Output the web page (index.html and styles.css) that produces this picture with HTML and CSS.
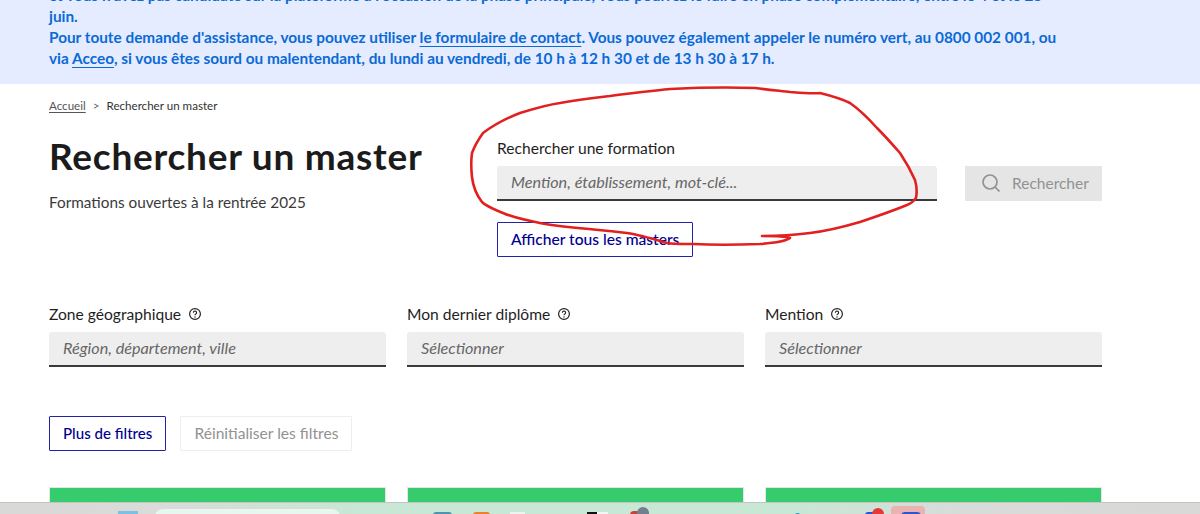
FILE: index.html
```html
<!DOCTYPE html>
<html lang="fr">
<head>
<meta charset="utf-8">
<title>Rechercher un master</title>
<link rel="stylesheet" href="styles.css">
</head>
<body>
<div class="page">
  <div class="banner">
    <p>et vous n'avez pas candidaté sur la plateforme à l'occasion de la phase principale, vous pourrez le faire en phase complémentaire, entre le 4 et le 25 juin.<br>
    Pour toute demande d'assistance, vous pouvez utiliser <a href="#">le formulaire de contact</a>. Vous pouvez également appeler le numéro vert, au 0800 002 001, ou via <a href="#">Acceo</a>, si vous êtes sourd ou malentendant, du lundi au vendredi, de 10 h à 12 h 30 et de 13 h 30 à 17 h.</p>
  </div>
  <main class="main">
    <nav class="crumbs"><a href="#">Accueil</a><span class="sep">&gt;</span><span>Rechercher un master</span></nav>
    <section class="hero">
      <div class="hero-left">
        <h1>Rechercher un master</h1>
        <p class="sub">Formations ouvertes à la rentrée 2025</p>
      </div>
      <div class="hero-right">
        <div class="search-row">
          <div class="search-field">
            <label class="label">Rechercher une formation</label>
            <div class="input">Mention, établissement, mot-clé...</div>
          </div>
          <div class="search-btn">
            <svg class="search-icon" viewBox="0 0 20 20" width="20" height="20" aria-hidden="true"><circle cx="9" cy="9" r="7" fill="none" stroke="#929292" stroke-width="1.7"/><path d="M14 14l4.5 4.5" stroke="#929292" stroke-width="1.7" fill="none"/></svg>
            <span>Rechercher</span>
          </div>
        </div>
        <a class="btn btn-all" href="#">Afficher tous les masters</a>
      </div>
    </section>
    <section class="filters">
      <div class="filter">
        <div class="label">Zone géographique <svg class="help" viewBox="0 0 14 14" width="14" height="14" aria-hidden="true"><circle cx="7" cy="7" r="5.4" fill="none" stroke="#222" stroke-width="1.2"/><path d="M5.4 5.7a1.6 1.6 0 1 1 2.4 1.4c-.5.3-.8.6-.8 1.1" fill="none" stroke="#222" stroke-width="1.1"/><circle cx="7" cy="10" r=".7" fill="#222"/></svg></div>
        <div class="input">Région, département, ville</div>
      </div>
      <div class="filter">
        <div class="label">Mon dernier diplôme <svg class="help" viewBox="0 0 14 14" width="14" height="14" aria-hidden="true"><circle cx="7" cy="7" r="5.4" fill="none" stroke="#222" stroke-width="1.2"/><path d="M5.4 5.7a1.6 1.6 0 1 1 2.4 1.4c-.5.3-.8.6-.8 1.1" fill="none" stroke="#222" stroke-width="1.1"/><circle cx="7" cy="10" r=".7" fill="#222"/></svg></div>
        <div class="input">Sélectionner</div>
      </div>
      <div class="filter">
        <div class="label">Mention <svg class="help" viewBox="0 0 14 14" width="14" height="14" aria-hidden="true"><circle cx="7" cy="7" r="5.4" fill="none" stroke="#222" stroke-width="1.2"/><path d="M5.4 5.7a1.6 1.6 0 1 1 2.4 1.4c-.5.3-.8.6-.8 1.1" fill="none" stroke="#222" stroke-width="1.1"/><circle cx="7" cy="10" r=".7" fill="#222"/></svg></div>
        <div class="input">Sélectionner</div>
      </div>
    </section>
    <div class="actions">
      <a class="btn btn-more" href="#">Plus de filtres</a>
      <span class="btn btn-off">Réinitialiser les filtres</span>
    </div>
    <section class="cards">
      <div class="card"></div>
      <div class="card"></div>
      <div class="card"></div>
    </section>
  </main>
  <footer class="taskbar">
    <span class="tb tb-win"></span>
    <span class="tb pill"></span>
    <span class="tb tb-steel"></span>
    <span class="tb tb-orange"></span>
    <span class="tb tb-white"></span>
    <span class="tb tb-black"></span>
    <span class="tb tb-white2"></span>
    <span class="tb tb-red"></span>
    <span class="tb tb-gray"></span>
    <span class="tb tb-dot"></span>
    <span class="tb tb-blue"></span>
    <span class="tb tb-badge"></span>
    <span class="tb tb-pink"><span class="tb-pink-in"></span></span>
  </footer>
  <svg class="scribble" viewBox="0 0 1200 514" width="1200" height="514" aria-hidden="true"><path d="M762 236C772 236 785 236 790 238C786 241 774 243 760 244C735 245 710 245 693 244C680 244 672 244 667 243C650 238 640 235 627 233C600 229 565 228 540 223C525 220 512 217 503 213C494 209 487 207 482 202C475 193 473 186 472 177C471 168 471 160 472 153C475 145 478 140 483 133C495 124 507 118 520 113C533 109 546 105 560 103C577 100 593 98 610 96C631 93 652 91 670 89C690 88 725 87 755 88C770 90 782 91 790 92C802 93 812 94 820 93C832 96 842 99 850 103C860 110 868 118 877 128C885 136 893 145 900 153C906 162 911 171 915 180C917 187 917 193 916 198C913 202 910 204 907 205C890 212 875 217 860 222C843 227 827 231 810 233C795 235 778 236 762 236" fill="none" stroke="#e1201f" stroke-width="2.6" stroke-linecap="round" stroke-linejoin="round"/></svg>
</div>
</body>
</html>
```
FILE: styles.css
```css
* { box-sizing: border-box; }
html, body { margin: 0; padding: 0; }
body { font-family: "Lato", "Liberation Sans", sans-serif; color: #1e1e1e; background: #fff; }
a { color: inherit; }
.page { position: relative; width: 1200px; height: 514px; overflow: hidden; display: flex; flex-direction: column; }
.banner { height: 84px; flex: none; background: #e6ecff; padding: 0 136px 0 49px; overflow: hidden; }
.banner p { margin: -15px 0 0; font-size: 15.35px; font-weight: 700; line-height: 21px; color: #0a6ad6; }
.banner a { text-underline-offset: 3px; text-decoration-thickness: 1px; }
.main { flex: 1; min-height: 0; overflow: hidden; padding: 14px 98px 0 49px; }
.crumbs { display: flex; align-items: center; gap: 7px; height: 14px; font-size: 11.6px; color: #333; }
.crumbs a { color: #555; text-underline-offset: 2px; }
.sep { color: #666; }
.hero { display: flex; margin-top: 26px; height: 129px; }
.hero-left { width: 448px; flex: none; }
h1 { margin: 0; font-size: 37px; line-height: 36px; font-weight: 700; color: #1b1b1b; letter-spacing: .75px; }
.sub { margin: 18px 0 0; font-size: 15.3px; line-height: 20px; color: #3a3a3a; }
.hero-right { flex: 1; }
.search-row { display: flex; gap: 28px; align-items: flex-end; }
.search-field { width: 440px; flex: none; }
.label { font-size: 15.6px; line-height: 20px; height: 20px; margin-bottom: 8px; color: #1e1e1e; display: flex; align-items: center; gap: 7px; }
.input { height: 35px; background: #eeeeee; border-bottom: 2px solid #3a3a3a; border-radius: 3px 3px 0 0; padding: 0 14px; font-size: 16.2px; font-style: italic; line-height: 32px; color: #666; }
.search-btn { width: 137px; height: 35px; background: #e5e5e5; color: #929292; display: flex; align-items: center; gap: 11px; padding: 0 16px 1px; font-size: 15.5px; }
.search-icon { flex: none; }
.btn { display: inline-flex; align-items: center; height: 35px; padding: 0 13px 2px; border: 1px solid #2323a8; color: #000091; text-decoration: none; font-size: 15.6px; font-weight: 500; border-radius: 1px; white-space: nowrap; }
.btn-all { margin-top: 21px; width: 196px; }
.btn-more { font-size: 15.1px; }
.btn-off { border-color: #eeeeee; color: #929292; font-weight: 400; }
.filters { display: grid; grid-template-columns: repeat(3, 337px); column-gap: 21px; margin-top: 37px; }
.help { flex: none; }
.actions { display: flex; gap: 14px; margin-top: 49px; }
.cards { display: grid; grid-template-columns: repeat(3, 337px); column-gap: 21px; margin-top: 36px; }
.card { height: 40px; background: #36cc6e; border: 1px solid #e5e5e5; border-bottom: 0; }
.taskbar { height: 12px; flex: none; display: flex; align-items: flex-start; border-top: 1px solid #c4c4c0; background: linear-gradient(90deg, #d9d9d7 0%, #d9dcd9 14%, #c8e7d4 30%, #c8e7d4 66%, #d8dcd9 80%, #d9d9d7 100%); overflow: hidden; }
.tb { display: block; flex: none; }
.tb-win { width: 20px; height: 3px; margin: 8px 0 0 118px; background: #7cc0e2; }
.pill { width: 185px; height: 14px; margin: 6px 0 0 17px; background: #e9f5ef; border-radius: 8px 8px 0 0; }
.tb-steel { width: 19px; height: 3px; margin: 9px 0 0 93px; background: #4f93ad; border-radius: 3px 3px 0 0; }
.tb-orange { width: 17px; height: 3px; margin: 9px 0 0 21px; background: #ee7f2c; border-radius: 3px 3px 0 0; }
.tb-white { width: 15px; height: 3px; margin: 9px 0 0 20px; background: #eef3f0; }
.tb-black { width: 10px; height: 3px; margin: 9px 0 0 62px; background: #111; }
.tb-white2 { width: 11px; height: 3px; margin: 9px 0 0 0; background: #f4f4f4; }
.tb-red { width: 10px; height: 4px; margin: 8px 0 0 22px; background: #c9413c; border-radius: 4px 4px 0 0; }
.tb-gray { width: 12px; height: 8px; margin: 4px 0 0 -3px; background: #71808c; border-radius: 6px 6px 0 0; }
.tb-dot { width: 5px; height: 2px; margin: 10px 0 0 146px; background: #2a9fd6; border-radius: 3px 3px 0 0; }
.tb-blue { width: 14px; height: 3px; margin: 9px 0 0 65px; background: #2457d6; border-radius: 4px 4px 0 0; }
.tb-badge { width: 12px; height: 7px; margin: 5px 0 0 -7px; background: #e53935; border-radius: 6px 6px 0 0; }
.tb-pink { width: 34px; height: 10px; margin: 3px 0 0 7px; padding: 6px 0 0 10px; background: #eab3b1; border-radius: 4px 4px 0 0; }
.tb-pink-in { display: block; width: 20px; height: 4px; background: #2f55c8; border-radius: 8px 8px 0 0; }
.scribble { position: absolute; top: 0; left: 0; pointer-events: none; }
```
